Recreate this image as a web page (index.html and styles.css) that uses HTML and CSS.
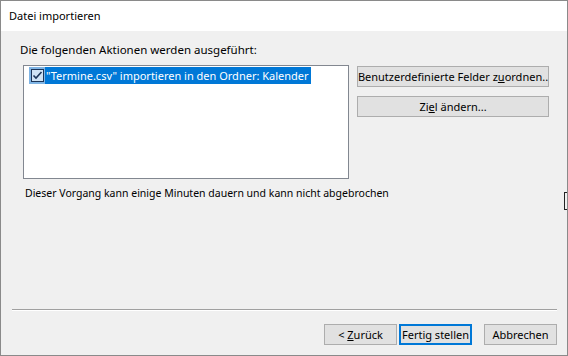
FILE: index.html
```html
<!DOCTYPE html>
<html lang="de">
<head>
    <meta charset="UTF-8">
    <title>Datei importieren</title>
    <link rel="stylesheet" href="styles.css">
</head>
<body>
    <div class="window">
        <div class="title-bar">Datei importieren</div>
        <div class="content">
            <div class="label">Die folgenden Aktionen werden ausgeführt:</div>
            <div class="row">
                <div class="list">
                    <div class="item">
                        <span class="check">
                            <svg width="13" height="13" viewBox="0 0 13 13">
                                <rect x="0.5" y="0.5" width="12" height="12" fill="#cfe3f5" stroke="#1c3559"/>
                                <path d="M2.5 6.5 L5 9 L10.5 3" fill="none" stroke="#1c3559" stroke-width="1.6"/>
                            </svg>
                        </span>
                        <span class="item-text">"Termine.csv" importieren in den Ordner: Kalender</span>
                    </div>
                </div>
                <div class="side-buttons">
                    <div class="btn wide"><span>Benutzerdefinierte Felder z<u>u</u>ordnen..</span></div>
                    <div class="btn wide"><span>Zi<u>e</u>l ändern...</span></div>
                </div>
            </div>
            <div class="note">Dieser Vorgang kann einige Minuten dauern und kann nicht abgebrochen</div>
            <span class="cursor-mark"></span>
            <div class="footer">
                <div class="separator"></div>
                <div class="buttons">
                    <div class="btn"><span>&lt; <u>Z</u>urück</span></div>
                    <div class="btn default"><span>Fertig stellen</span></div>
                    <div class="btn cancel"><span>Abbrechen</span></div>
                </div>
            </div>
        </div>
    </div>
</body>
</html>
```

FILE: styles.css
```css
body{
    margin: 0;
    font-family: "Noto Sans", "Open Sans", sans-serif;
    font-size: 11px;
    color: #000;
}
.window{
    width: 568px;
    height: 356px;
    box-sizing: border-box;
    border: 1px solid #8a8a8a;
    display: flex;
    flex-direction: column;
    background-color: #f0f0f0;
}
.title-bar{
    background-color: white;
    height: 30px;
    line-height: 30px;
    padding-left: 8px;
    font-size: 11px;
}
.content{
    flex: 1;
    display: flex;
    flex-direction: column;
    padding-top: 11px;
    position: relative;
}
.label{
    line-height: 16px;
    padding-left: 19px;
    font-size: 11.5px;
}
.row{
    display: flex;
    margin-top: 7px;
    margin-left: 22px;
    gap: 8px;
}
.list{
    width: 326px;
    height: 114px;
    box-sizing: border-box;
    border: 1px solid #828790;
    background: white;
    padding: 1px 5px;
}
.item{
    display: flex;
    height: 17px;
    align-items: center;
}
.check{
    width: 16px;
    height: 17px;
    background-color: #7fb4e4;
    display: flex;
    align-items: center;
    justify-content: center;
}
.check svg{
    display: block;
}
.item-text{
    background-color: #0078d7;
    color: white;
    height: 17px;
    line-height: 17px;
    padding: 0 2px 0 1px;
}
.side-buttons{
    display: flex;
    flex-direction: column;
    gap: 9px;
    margin-top: 1px;
}
.btn{
    width: 73px;
    height: 21px;
    box-sizing: border-box;
    border: 1px solid #adadad;
    background-color: #e1e1e1;
    display: flex;
    align-items: center;
    justify-content: center;
    white-space: nowrap;
    overflow: hidden;
    line-height: 19px;
}
.btn.wide{
    width: 192px;
}
.btn.default{
    border: 2px solid #0078d7;
}
.note{
    margin-top: 6px;
    margin-left: 24px;
    line-height: 16px;
    font-size: 10.5px;
}
.cursor-mark{
    position: absolute;
    right: 0;
    top: 161px;
    width: 2px;
    height: 16px;
    border: 1px solid #222;
    border-right: none;
}
.footer{
    margin-top: auto;
    padding-bottom: 10px;
}
.separator{
    margin: 0 10px 0 11px;
    border-top: 1px solid #a0a0a0;
    border-bottom: 1px solid white;
}
.buttons{
    display: flex;
    justify-content: flex-end;
    margin-top: 13px;
    padding-right: 10px;
    gap: 2px;
}
.btn.cancel{
    margin-left: 10px;
}
```
